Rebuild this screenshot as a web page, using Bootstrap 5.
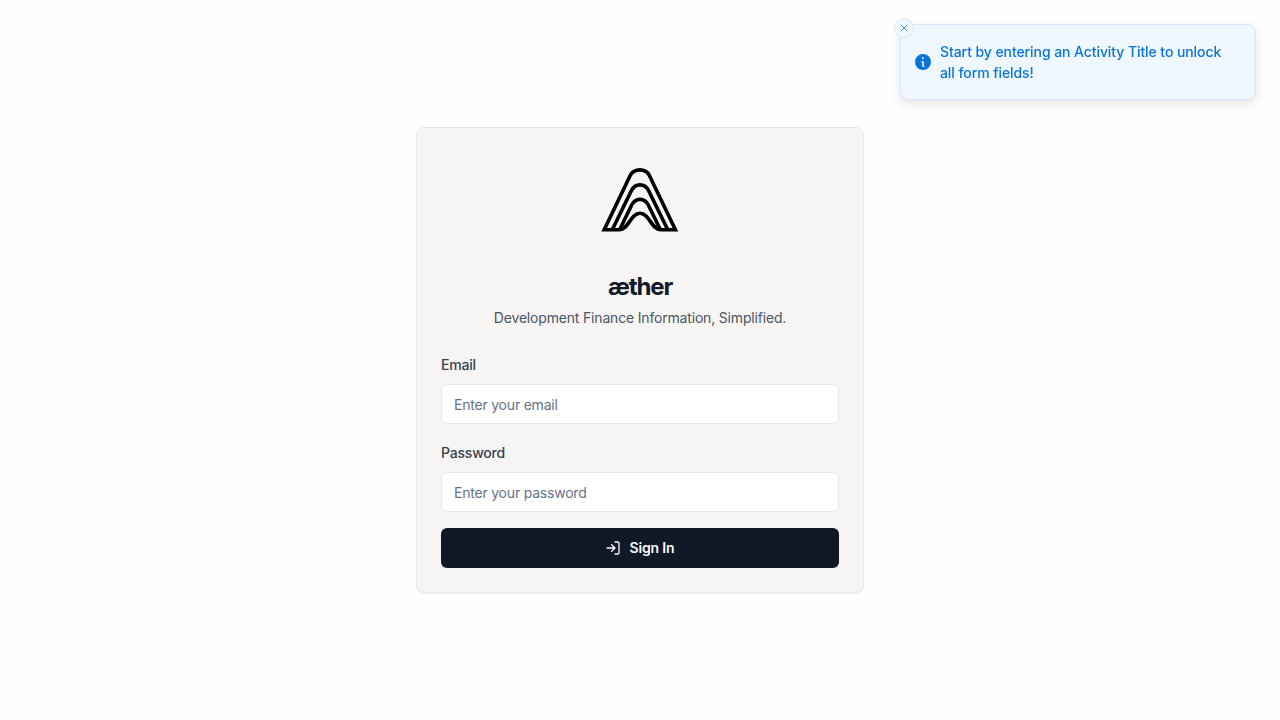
<!DOCTYPE html>
<html lang="en">
<head>
<meta charset="utf-8">
<meta name="viewport" content="width=device-width, initial-scale=1">
<title>æther</title>
<link href="https://cdn.jsdelivr.net/npm/bootstrap@5.3.0/dist/css/bootstrap.min.css" rel="stylesheet">
<style>
body{font-family:Inter,"Liberation Sans",sans-serif;font-size:14px;line-height:20px;background:#fefefe;color:#0f172a}
.login-card{width:448px;height:466px;background:#f6f5f3;border:1px solid #e2e8f0;border-radius:8px;box-shadow:0 1px 2px rgba(0,0,0,.05);padding:24px}
.brand-logo{margin:3px auto 0;display:block}
.brand-name{font-size:24px;line-height:32px;font-weight:700;letter-spacing:-1.1px;color:#111827;margin:26px 0 5px}
.tagline{color:#4b5563;margin-bottom:27px;letter-spacing:-.18px}
.form-label{font-weight:550;color:#374151;line-height:20px;margin-bottom:9px;display:block;letter-spacing:-.2px}
.form-control{height:40px;font-size:14px;line-height:20px;border:1px solid #e2e8f0;border-radius:6px;padding:8px 12px;letter-spacing:-.21px}
.form-control::placeholder{color:#64748b}
.field{margin-bottom:19px}
.field + .field{margin-bottom:16px}
.btn-signin,.btn-signin:hover{background:#111827;color:#f8fafc;height:40px;border:0;border-radius:6px;font-size:14px;line-height:20px;font-weight:600;letter-spacing:-.15px}
.notice{position:fixed;top:24px;right:24px;width:356px;height:76px;background:#f0f8ff;border:1px solid #d9e6fd;border-radius:8px;color:#0973dc;box-shadow:0 4px 12px rgba(0,0,0,.1);padding:0 24px 0 14px;font-weight:550;line-height:21px;letter-spacing:-.08px}
.notice-close{position:absolute;left:-7px;top:-7px;width:20px;height:20px;border-radius:50%;background:#f0f8ff;border:1px solid #d9e6fd;color:#0973dc;padding:0}
</style>
</head>
<body>
<main class="min-vh-100 d-flex align-items-center justify-content-center">
<section class="login-card">
<svg class="brand-logo" width="100" height="90" viewBox="0 0 100 90" fill="none" stroke="#000" stroke-width="3.6" stroke-linejoin="miter">
<path d="M29 74.7H14.2L40.2 20.5C44 13 55.6 13 59.4 20.5L85.4 74.7H71C61 74.7 59.6 58.3 50 58.3C40.4 58.3 39 74.7 29 74.7Z"/>
<path d="M22.6 74L41.2 36C45 27.8 55 27.8 58.8 36L77.4 74"/>
<path d="M30 74L41.7 50C45.5 42.5 54.5 42.5 58.3 50L70 74"/>
</svg>
<h1 class="brand-name text-center">æther</h1>
<p class="tagline text-center">Development Finance Information, Simplified.</p>
<form>
<div class="field">
<label class="form-label" for="email">Email</label>
<input class="form-control" id="email" type="email" placeholder="Enter your email">
</div>
<div class="field">
<label class="form-label" for="password">Password</label>
<input class="form-control" id="password" type="password" placeholder="Enter your password">
</div>
<button class="btn btn-signin w-100 d-flex align-items-center justify-content-center gap-2" type="button">
<svg width="16" height="16" viewBox="0 0 24 24" fill="none" stroke="currentColor" stroke-width="2" stroke-linecap="round" stroke-linejoin="round"><path d="M15 3h4a2 2 0 0 1 2 2v14a2 2 0 0 1-2 2h-4M10 17l5-5-5-5M15 12H3"/></svg>
<span>Sign In</span>
</button>
</form>
</section>
</main>
<aside class="notice d-flex align-items-center" role="status">
<button class="notice-close d-flex align-items-center justify-content-center" type="button" aria-label="Close"><svg width="12" height="12" viewBox="0 0 24 24" fill="none" stroke="currentColor" stroke-width="1.5" stroke-linecap="round"><path d="M18 6L6 18M6 6l12 12"/></svg></button>
<svg class="flex-shrink-0" style="margin:0 7px 0 -2px" width="20" height="20" viewBox="0 0 20 20" fill="currentColor"><path fill-rule="evenodd" d="M18 10a8 8 0 1 1-16 0 8 8 0 0 1 16 0Zm-7-4a1 1 0 1 1-2 0 1 1 0 0 1 2 0ZM9 9a.75.75 0 0 0 0 1.5h.253a.25.25 0 0 1 .244.304l-.459 2.066A1.75 1.75 0 0 0 10.747 15H11a.75.75 0 0 0 0-1.5h-.253a.25.25 0 0 1-.244-.304l.459-2.066A1.75 1.75 0 0 0 9.253 9H9Z" clip-rule="evenodd"/></svg>
<div>Start by entering an Activity Title to unlock all form fields!</div>
</aside>
<script src="https://cdn.jsdelivr.net/npm/bootstrap@5.3.0/dist/js/bootstrap.bundle.min.js"></script>
</body>
</html>
